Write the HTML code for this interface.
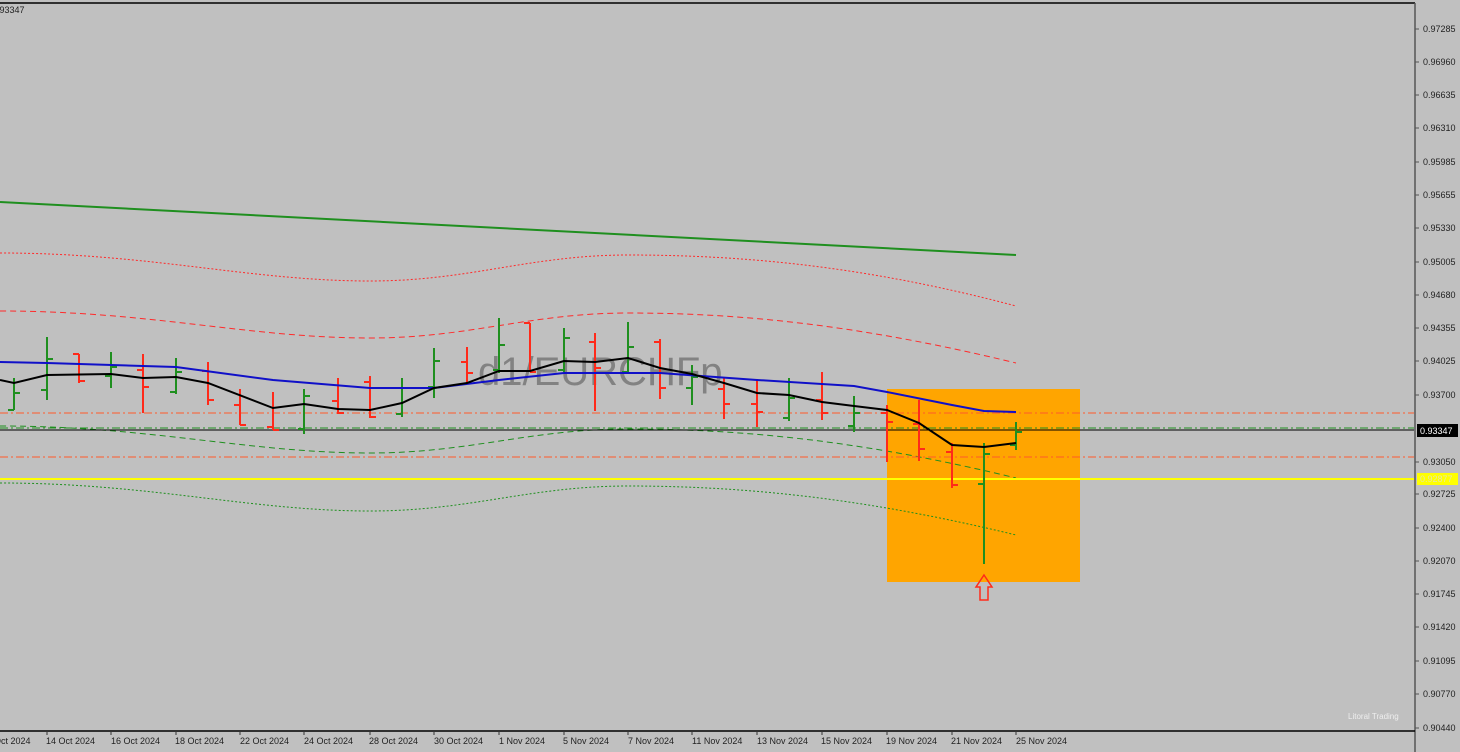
<!DOCTYPE html>
<html><head><meta charset="utf-8"><style>
html,body{margin:0;padding:0;background:#c0c0c0;width:1460px;height:752px;overflow:hidden}
svg{display:block}
text{font-family:"Liberation Sans",sans-serif}
</style></head><body>
<svg width="1460" height="752" viewBox="0 0 1460 752" xmlns="http://www.w3.org/2000/svg">
<rect width="1460" height="752" fill="#c0c0c0"/>
<rect x="887" y="389" width="193" height="193" fill="#ffa500"/>
<text x="478" y="385" font-size="40" fill="#6e6e6e" fill-opacity="0.75">d1/EURCHFp</text>
<!-- envelopes -->
<path d="M0,202 Q508,228 1016,255" fill="none" stroke="#1f8f1f" stroke-width="2"/>
<path d="M0,253 C150,253 250,281 370,281 C470,281 530,255 628,255 C760,255 880,270 1016,306" fill="none" stroke="#ff2a2a" stroke-width="1" stroke-dasharray="2,2"/>
<path d="M0,311 C150,311 250,338 370,338 C470,338 530,313 628,313 C760,313 880,330 1016,363" fill="none" stroke="#ff2a2a" stroke-width="1" stroke-dasharray="6,4"/>
<path d="M0,426 C150,426 250,453 370,453 C470,453 530,429 628,429 C760,429 880,445 1016,478" fill="none" stroke="#1f8f1f" stroke-width="1" stroke-dasharray="6,4"/>
<path d="M0,483 C150,483 250,511 370,511 C470,511 530,486 628,486 C760,486 880,502 1016,535" fill="none" stroke="#1f8f1f" stroke-width="1" stroke-dasharray="2,2"/>
<!-- horizontal levels -->
<line x1="0" y1="413" x2="1414" y2="413" stroke="#ff5a2a" stroke-width="1" stroke-dasharray="8,3,2,3"/>
<line x1="0" y1="457" x2="1414" y2="457" stroke="#ff5a2a" stroke-width="1" stroke-dasharray="8,3,2,3"/>
<line x1="0" y1="428" x2="1414" y2="428" stroke="#1f8f1f" stroke-width="1" stroke-dasharray="8,3,2,3"/>
<line x1="0" y1="430" x2="1414" y2="430" stroke="#000" stroke-width="1"/>
<line x1="0" y1="479" x2="1414" y2="479" stroke="#ffff00" stroke-width="2"/>
<!-- bars green -->
<path fill="none" stroke="#1f8f1f" stroke-width="2" d="
M14,378V410M8,410H14M14,393H20
M47,337V400M41,390H47M47,359H53
M111,352V388M105,376H111M111,367H117
M176,358V394M170,392H176M176,372H182
M304,389V434M298,429H304M304,396H310
M402,378V417M396,414H402M402,388H408
M434,348V398M428,387H434M434,361H440
M499,318V373M493,370H499M499,345H505
M564,328V372M558,370H564M564,338H570
M628,322V373M622,372H628M628,347H634
M692,365V405M686,388H692M692,377H698
M789,378V421M783,418H789M789,398H795
M854,396V432M848,426H854M854,413H860
M984,443V564M978,484H984M984,454H990
M1016,422V450M1010,445H1016M1016,432H1022"/>
<path fill="none" stroke="#ff2a1a" stroke-width="2" d="
M79,354V383M73,354H79M79,381H85
M143,354V413M137,370H143M143,387H149
M208,362V405M202,371H208M208,400H214
M240,389V425M234,405H240M240,425H246
M273,392V430M267,427H273M273,430H279
M338,378V414M332,401H338M338,413H344
M370,376V418M364,382H370M370,417H376
M467,347V383M461,362H467M467,373H473
M530,323V372M524,323H530M530,372H536
M595,333V411M589,342H595M595,368H601
M660,339V399M654,342H660M660,388H666
M724,377V419M718,389H724M724,404H730
M757,379V427M751,404H757M757,412H763
M822,372V420M816,400H822M822,413H828
M887,405V462M881,413H887M887,422H893
M919,400V461M913,424H919M919,449H925
M952,443V488M946,452H952M952,485H958"/>
<!-- MAs -->
<polyline fill="none" stroke="#1010c8" stroke-width="2" points="0,362 47,363 143,366 176,367 273,380 370,388 434,388 499,380 564,373 660,373 757,380 854,386 887,392 952,405 984,411 1016,412"/>
<polyline fill="none" stroke="#000" stroke-width="2" points="0,380 14,383 47,375 111,374 143,378 176,377 208,383 273,408 304,404 338,409 370,410 402,403 434,388 467,383 499,371 530,371 564,361 595,362 628,358 660,368 692,374 724,383 757,393 789,395 822,402 854,406 887,410 919,423 952,445 984,447 1016,443"/>
<!-- arrow -->
<path d="M984,575 L992,587 L988,587 L988,600 L980,600 L980,587 L976,587 Z" fill="none" stroke="#ff2a1a" stroke-width="1.5"/>
<!-- frame -->
<line x1="0" y1="3" x2="1415" y2="3" stroke="#000" stroke-width="1.5"/>
<line x1="1415" y1="3" x2="1415" y2="752" stroke="#555" stroke-width="1.5"/>
<line x1="0" y1="731" x2="1415" y2="731" stroke="#000" stroke-width="1.5"/>
<text x="-3" y="13" font-size="9" fill="#222">.93347</text>
<text x="1348" y="719" font-size="8" fill="#eeeeee">Litoral Trading</text>
<g font-size="9" fill="#222">
<text x="1423" y="32">0.97285</text><text x="1423" y="65">0.96960</text><text x="1423" y="98">0.96635</text><text x="1423" y="131">0.96310</text><text x="1423" y="165">0.95985</text><text x="1423" y="198">0.95655</text><text x="1423" y="231">0.95330</text><text x="1423" y="265">0.95005</text><text x="1423" y="298">0.94680</text><text x="1423" y="331">0.94355</text><text x="1423" y="364">0.94025</text><text x="1423" y="398">0.93700</text><text x="1423" y="465">0.93050</text><text x="1423" y="497">0.92725</text><text x="1423" y="531">0.92400</text><text x="1423" y="564">0.92070</text><text x="1423" y="597">0.91745</text><text x="1423" y="630">0.91420</text><text x="1423" y="664">0.91095</text><text x="1423" y="697">0.90770</text><text x="1423" y="731">0.90440</text>
</g>
<g stroke="#555" stroke-width="1">
<path d="M1415,29h4M1415,62h4M1415,95h4M1415,128h4M1415,162h4M1415,195h4M1415,228h4M1415,262h4M1415,295h4M1415,328h4M1415,361h4M1415,395h4M1415,462h4M1415,494h4M1415,528h4M1415,561h4M1415,594h4M1415,627h4M1415,661h4M1415,694h4M1415,728h4"/>
</g>
<rect x="1417" y="424" width="41" height="13" fill="#000"/>
<text x="1420" y="434" font-size="9" fill="#fff">0.93347</text>
<rect x="1417" y="473" width="41" height="12" fill="#ffff00"/>
<text x="1420" y="482" font-size="9" fill="#e8e8a0">0.92877</text>
<g stroke="#333" stroke-width="1"><path d="M47,731v4M111,731v4M176,731v4M240,731v4M304,731v4M370,731v4M434,731v4M499,731v4M564,731v4M628,731v4M692,731v4M757,731v4M822,731v4M887,731v4M952,731v4M1016,731v4"/></g>
<g font-size="9" fill="#222">
<text x="-6" y="744">Oct 2024</text>
<text x="46" y="744">14 Oct 2024</text><text x="111" y="744">16 Oct 2024</text><text x="175" y="744">18 Oct 2024</text><text x="240" y="744">22 Oct 2024</text><text x="304" y="744">24 Oct 2024</text><text x="369" y="744">28 Oct 2024</text><text x="434" y="744">30 Oct 2024</text><text x="499" y="744">1 Nov 2024</text><text x="563" y="744">5 Nov 2024</text><text x="628" y="744">7 Nov 2024</text><text x="692" y="744">11 Nov 2024</text><text x="757" y="744">13 Nov 2024</text><text x="821" y="744">15 Nov 2024</text><text x="886" y="744">19 Nov 2024</text><text x="951" y="744">21 Nov 2024</text><text x="1016" y="744">25 Nov 2024</text>
</g>
</svg>
</body></html>
